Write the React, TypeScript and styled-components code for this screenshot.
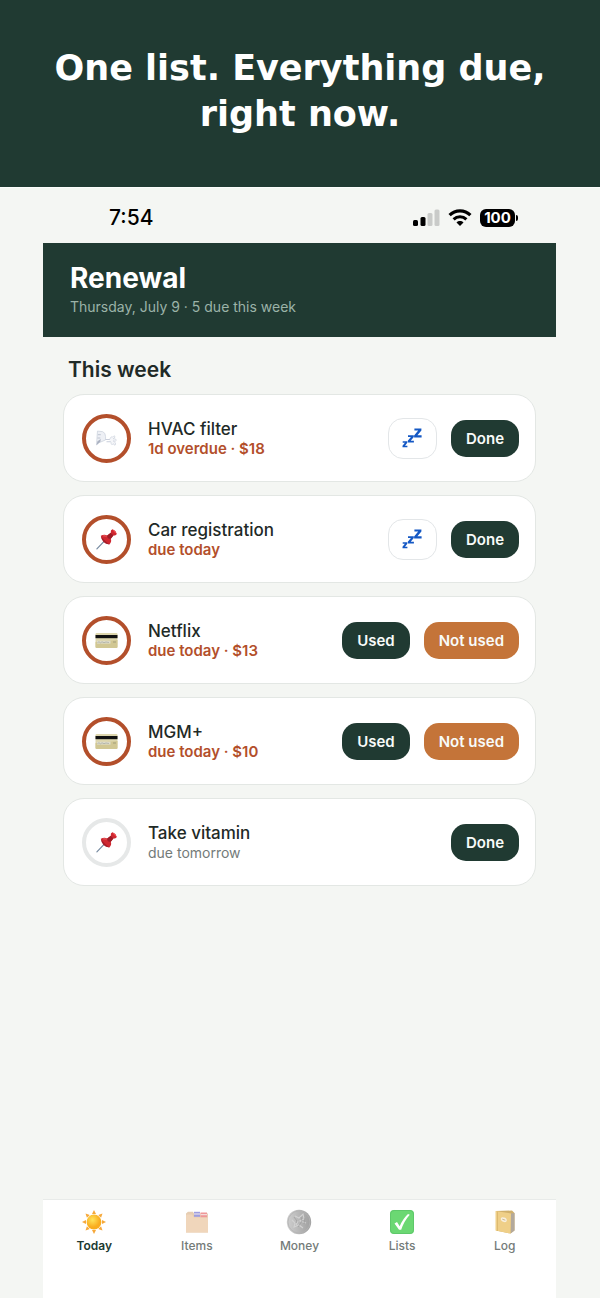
import { ReactNode } from "react";
import styled, { createGlobalStyle } from "styled-components";

const GlobalStyle = createGlobalStyle`
  * {
    box-sizing: border-box;
  }

  body {
    margin: 0;
    background-color: #f4f6f3;
    color: #1f2a27;
    font-family: Inter, "Liberation Sans", sans-serif;
  }

  h1, h2, h3, p, ul {
    margin: 0;
    padding: 0;
  }

  button {
    font-family: inherit;
    cursor: pointer;
  }
`;

const Wrapper = styled.div`
  min-height: 100vh;
  display: flex;
  flex-direction: column;
`;

const Banner = styled.header`
  padding: 45px 43px 50px;
  background-color: #203a32;
  border-bottom: 1px solid #fbfcfb;
`;

const BannerTitle = styled.h1`
  color: white;
  font-family: "DejaVu Sans", sans-serif;
  font-size: 35px;
  font-weight: 700;
  line-height: 46px;
  text-align: center;
`;

const Screen = styled.div`
  flex-grow: 1;
  margin: 0 44px 0 43px;
  display: flex;
  flex-direction: column;
`;

const StatusBar = styled.div`
  height: 55px;
  padding: 4px 38px 0 66px;
  display: flex;
  align-items: center;
  justify-content: space-between;
  color: black;
`;

const Clock = styled.span`
  font-size: 21px;
  font-weight: 500;
  line-height: 24px;
`;

const StatusIcons = styled.div`
  display: flex;
  align-items: center;
  gap: 8px;
`;

const Battery = styled.div`
  display: flex;
  align-items: center;
  gap: 1px;
`;

const BatteryBody = styled.span`
  width: 35px;
  border-radius: 6px;
  background-color: black;
  color: white;
  font-size: 15px;
  font-weight: 700;
  line-height: 18px;
  text-align: center;
`;

const BatteryTip = styled.span`
  width: 2px;
  height: 6px;
  border-radius: 0 2px 2px 0;
  background-color: black;
`;

const AppHeader = styled.div`
  padding: 18px 27px;
  background-color: #203a32;
`;

const AppTitle = styled.h2`
  color: white;
  font-size: 28px;
  font-weight: 700;
  line-height: 34px;
`;

const AppDate = styled.p`
  color: #9bb3a8;
  font-size: 14px;
  line-height: 24px;
`;

const Main = styled.main`
  flex-grow: 1;
  padding: 20px;
`;

const SectionTitle = styled.h3`
  padding: 0 5px;
  margin-bottom: 11px;
  font-size: 21px;
  font-weight: 600;
  line-height: 26px;
`;

const Cards = styled.ul`
  display: flex;
  flex-direction: column;
  gap: 13px;
  list-style: none;
`;

const Card = styled.li`
  min-height: 88px;
  padding: 18px 16px 18px 18px;
  display: flex;
  align-items: center;
  gap: 17px;
  background-color: white;
  border: 1px solid #e3e7e4;
  border-radius: 21px;
`;

const Ring = styled.div<{ $due: boolean }>`
  width: 49px;
  height: 49px;
  flex-shrink: 0;
  display: flex;
  align-items: center;
  justify-content: center;
  border: 4px solid ${({ $due }) => ($due ? "#b34f2b" : "#e6e8e8")};
  border-radius: 50%;
`;

const CardText = styled.div`
  flex-grow: 1;
  padding-top: 2px;
`;

const CardTitle = styled.p`
  font-size: 17px;
  font-weight: 500;
  line-height: 20px;
`;

const CardNote = styled.p<{ $due: boolean }>`
  color: ${({ $due }) => ($due ? "#b34f2b" : "#737b79")};
  font-size: ${({ $due }) => ($due ? 15 : 14)}px;
  font-weight: ${({ $due }) => ($due ? 600 : 400)};
  line-height: 20px;
`;

const Actions = styled.div`
  flex-shrink: 0;
  display: flex;
  align-items: center;
  gap: 14px;
`;

const ActionButton = styled.button<{ $warn?: boolean }>`
  height: 37px;
  padding: 0 15px;
  border: none;
  border-radius: 15px;
  background-color: ${({ $warn }) => ($warn ? "#c47439" : "#203a32")};
  color: #f8fbf9;
  font-size: 15px;
  font-weight: 600;
`;

const SnoozeButton = styled.button`
  width: 49px;
  height: 41px;
  padding: 0;
  display: flex;
  align-items: center;
  justify-content: center;
  border: 1px solid #e3e6e8;
  border-radius: 15px;
  background-color: white;
`;

const TabBar = styled.nav`
  padding: 9px 0 44px;
  display: flex;
  background-color: white;
  border-top: 1px solid #e8ebe9;
`;

const Tab = styled.a<{ $active?: boolean }>`
  flex: 1;
  display: flex;
  flex-direction: column;
  align-items: center;
  gap: 3px;
  color: ${({ $active }) => ($active ? "#203a32" : "#747b79")};
  font-size: 12px;
  font-weight: ${({ $active }) => ($active ? 600 : 500)};
  line-height: 16px;
  text-decoration: none;
`;

const SignalIcon = () => (
  <svg width="27" height="18" viewBox="0 0 27 18">
    <rect x="0" y="11" width="5" height="6" rx="1.5" />
    <rect x="7.5" y="8" width="5" height="9" rx="1.5" />
    <rect x="14.5" y="4" width="5" height="13" rx="1.5" fill="#c9cbc9" />
    <rect x="21.5" y="0.5" width="5" height="16.5" rx="1.5" fill="#c9cbc9" />
  </svg>
);

const WifiIcon = () => (
  <svg width="24" height="18" viewBox="0 0 24 18">
    <path d="M1.6 6.2C7.3 0.5 16.7 0.5 22.4 6.2" fill="none" stroke="black" strokeWidth="3.2" />
    <path d="M5.6 10.4C9.2 6.8 14.8 6.8 18.4 10.4" fill="none" stroke="black" strokeWidth="3" />
    <path d="M8.5 13.4C10.5 11.5 13.5 11.5 15.5 13.4L12 17Z" />
  </svg>
);

const FanIcon = () => (
  <svg width="23" height="19" viewBox="0 0 24 20">
    <path d="M2.5 2.2 8 2.8Q11 4 11 8V11.5L4 14.5 1.5 16.8Z" fill="#eef0f5" stroke="#ccd2dd" strokeWidth="0.8" />
    <path d="M3 6H6M2.5 9.5H5.5" stroke="#b6bdcb" strokeWidth="0.9" />
    <path d="M1.5 16.8 2.5 13 6 10.5 5.5 13.5Z" fill="#aab1c1" />
    <path d="M11 11H16M12 13.5H16" stroke="#c9cedb" strokeWidth="1.1" />
    <path
      d="M15.5 10.5Q17 7 18.5 8.5Q20 6 21 8Q20.5 10 19 10.2Q22.5 10 22.3 12Q21.8 13.5 19 12.5Q22.5 14.5 21.5 16.5Q20 18 19.5 15.5Q17 17.5 16.8 15Q17 13.5 15.5 12.5"
      fill="#f5f6f9"
      stroke="#d0d5df"
      strokeWidth="0.8"
    />
  </svg>
);

const PinIcon = () => (
  <svg width="24" height="24" viewBox="0 0 24 24">
    <path d="M9.3 14.2 1.9 21.8" stroke="#7589a0" strokeWidth="1.2" strokeLinecap="round" />
    <path d="M5.8 8.8Q9.2 6.8 12.2 8.4L15.8 5.8Q15.2 3.2 17.4 2.3Q20.9 3.6 21.8 7Q20.7 9.1 18.6 8.2L15.8 11.8Q17 15 14.4 17.4Q7.5 15.8 5.8 8.8Z" fill="#cf2730" />
    <path d="M5.8 8.8Q8 12.6 14.4 17.4Q6.8 17 5.8 8.8Z" fill="#a51d29" />
    <path d="M12.2 8.4Q12 12 15.8 11.8L18.6 8.2Q16.6 7.6 15.8 5.8Z" fill="#9d1c27" />
    <path d="M17.4 2.3Q20.9 3.6 21.8 7Q19 6.2 17.4 2.3Z" fill="#ee4a4c" />
    <path d="M8.2 8.9Q10.5 8.4 11.5 9.7" fill="none" stroke="#ef6464" strokeWidth="1" />
  </svg>
);

const CardIcon = () => (
  <svg width="23" height="15" viewBox="0 0 23 15">
    <rect x="0.5" y="0" width="22" height="15" rx="1.2" fill="#ddd6ad" />
    <path d="M0.5 9 22.5 7V13.8Q22.5 15 21.3 15H1.7Q0.5 15 0.5 13.8Z" fill="#d1c793" />
    <rect x="0.5" y="2" width="22" height="3.2" fill="#111" />
    <rect x="2" y="7.8" width="13.5" height="2.8" fill="#dedccb" />
    <path d="M2.5 9.5 4 8.8 5.5 9.8 7 8.8 9 9.7 11 9 14 9.5" fill="none" stroke="#9b9d95" strokeWidth="0.6" />
    <path d="M18 9H21" stroke="#9d9878" strokeWidth="0.9" />
  </svg>
);

const SnoozeIcon = () => (
  <svg width="20" height="20" viewBox="0 0 20 20" fill="#1458c4">
    <path d="M12.4 0.4H19.4V2.4L15.4 7.3H19.6V9.4H12.1V7.4L16.2 2.5H12.4Z" />
    <path d="M6 7.2H11.8V8.9L8.7 12.7H11.9V14.5H5.8V12.8L8.9 9H6Z" />
    <path d="M0.7 13.3H5.3V14.7L3 17.7H5.4V19.2H0.5V17.8L2.9 14.8H0.7Z" />
  </svg>
);

const SunIcon = () => (
  <svg width="26" height="26" viewBox="0 0 26 26">
    <defs>
      <radialGradient id="sun" cx="0.4" cy="0.35">
        <stop offset="0" stopColor="#ffe45a" />
        <stop offset="1" stopColor="#f9ac1e" />
      </radialGradient>
    </defs>
    {[0, 45, 90, 135, 180, 225, 270, 315].map((angle) => (
      <path key={angle} d="M11 5 13 1 15 5Z" fill="#f6a83a" transform={`rotate(${angle} 13 13)`} />
    ))}
    <circle cx="13" cy="13" r="7.4" fill="url(#sun)" />
  </svg>
);

const DividersIcon = () => (
  <svg width="26" height="26" viewBox="0 0 26 26">
    <path d="M2 4.5 4 2.8H9L10 4.5H24V23.5H2Z" fill="#e6cdb2" />
    <rect x="10" y="2.8" width="6" height="5" fill="#9d9de0" />
    <rect x="16.5" y="3.5" width="6.5" height="5" fill="#ef9797" />
    <path d="M10 5H16M16.5 5.7H23" stroke="#f6ecec" strokeWidth="1" />
    <path d="M2 6.5Q2 5.5 3 5.5H8L10 8.5H24V23.5H2Z" fill="#f0d6bb" />
  </svg>
);

const CoinIcon = () => (
  <svg width="26" height="26" viewBox="0 0 26 26">
    <defs>
      <linearGradient id="coin" x1="0" y1="0" x2="1" y2="0">
        <stop offset="0" stopColor="#cfcfcf" />
        <stop offset="1" stopColor="#9f9f9f" />
      </linearGradient>
    </defs>
    <circle cx="13" cy="13" r="12.2" fill="url(#coin)" />
    <circle cx="13" cy="13" r="11" fill="none" stroke="#b4b4b4" strokeWidth="0.8" />
    <path d="M9 7 13 9 17 5 18 10 14 12 20 14M6 11 9 14 8 18 13 16 17 19M12 12 10 16" fill="none" stroke="#d2d2d2" strokeWidth="1.1" />
    <path d="M8 8 11 12 10 14M15 8 16 12 12 18M19 9 18 15" fill="none" stroke="#a0a0a0" strokeWidth="0.8" />
  </svg>
);

const CheckIcon = () => (
  <svg width="26" height="26" viewBox="0 0 26 26">
    <rect x="1" y="1" width="24" height="24" rx="4" fill="#6bd873" />
    <rect x="1.5" y="1.5" width="23" height="23" rx="3.6" fill="none" stroke="#5ec86a" />
    <path d="M5.5 14.5 8 13 10.7 17.2Q14 9.5 19 5L20.8 5.8Q15 12.2 12.2 20.8H10Z" fill="white" />
  </svg>
);

const BookIcon = () => (
  <svg width="26" height="26" viewBox="0 0 26 26">
    <path d="M4 2 20 1.5 22.5 4V21.5L18.5 24.5 4 21.5Z" fill="#d0b06c" />
    <path d="M19 4.5 22.5 4V21.5L18.5 24.5Z" fill="#b3a99c" />
    <path d="M3.5 2 19 4.5 18.5 24.5 3.5 21.5Z" fill="#efcf88" />
    <path d="M5.5 2.5V22" stroke="#d8b569" strokeWidth="0.8" />
    <path d="M8.8 9.5Q9.5 7.8 12 8.6Q14.8 9 14.8 11.4Q14.5 13.6 12 13Q8.6 12.4 8.8 9.5Z" fill="#f8f0df" />
    <path d="M10.3 10.2 13.3 11.2" stroke="#bda67c" strokeWidth="0.8" />
  </svg>
);

interface IItem {
  title: string;
  note: string;
  due: boolean;
  icon: ReactNode;
  actions: ("snooze" | "Done" | "Used" | "Not used")[];
}

const items: IItem[] = [
  { title: "HVAC filter", note: "1d overdue · $18", due: true, icon: <FanIcon />, actions: ["snooze", "Done"] },
  { title: "Car registration", note: "due today", due: true, icon: <PinIcon />, actions: ["snooze", "Done"] },
  { title: "Netflix", note: "due today · $13", due: true, icon: <CardIcon />, actions: ["Used", "Not used"] },
  { title: "MGM+", note: "due today · $10", due: true, icon: <CardIcon />, actions: ["Used", "Not used"] },
  { title: "Take vitamin", note: "due tomorrow", due: false, icon: <PinIcon />, actions: ["Done"] },
];

const tabs = [
  { label: "Today", icon: <SunIcon /> },
  { label: "Items", icon: <DividersIcon /> },
  { label: "Money", icon: <CoinIcon /> },
  { label: "Lists", icon: <CheckIcon /> },
  { label: "Log", icon: <BookIcon /> },
];

const App = () => {
  return (
    <Wrapper>
      <GlobalStyle />
      <Banner>
        <BannerTitle>One list. Everything due, right now.</BannerTitle>
      </Banner>
      <Screen>
        <StatusBar>
          <Clock>7:54</Clock>
          <StatusIcons>
            <SignalIcon />
            <WifiIcon />
            <Battery>
              <BatteryBody>100</BatteryBody>
              <BatteryTip />
            </Battery>
          </StatusIcons>
        </StatusBar>
        <AppHeader>
          <AppTitle>Renewal</AppTitle>
          <AppDate>Thursday, July 9 · 5 due this week</AppDate>
        </AppHeader>
        <Main>
          <SectionTitle>This week</SectionTitle>
          <Cards>
            {items.map((item) => (
              <Card key={item.title}>
                <Ring $due={item.due}>{item.icon}</Ring>
                <CardText>
                  <CardTitle>{item.title}</CardTitle>
                  <CardNote $due={item.due}>{item.note}</CardNote>
                </CardText>
                <Actions>
                  {item.actions.map((action) =>
                    action === "snooze" ? (
                      <SnoozeButton key={action} type="button" aria-label="Snooze">
                        <SnoozeIcon />
                      </SnoozeButton>
                    ) : (
                      <ActionButton key={action} type="button" $warn={action === "Not used"}>
                        {action}
                      </ActionButton>
                    )
                  )}
                </Actions>
              </Card>
            ))}
          </Cards>
        </Main>
        <TabBar>
          {tabs.map((tab, idx) => (
            <Tab key={tab.label} href={`#${tab.label.toLowerCase()}`} $active={idx === 0}>
              {tab.icon}
              {tab.label}
            </Tab>
          ))}
        </TabBar>
      </Screen>
    </Wrapper>
  );
};

export default App;
